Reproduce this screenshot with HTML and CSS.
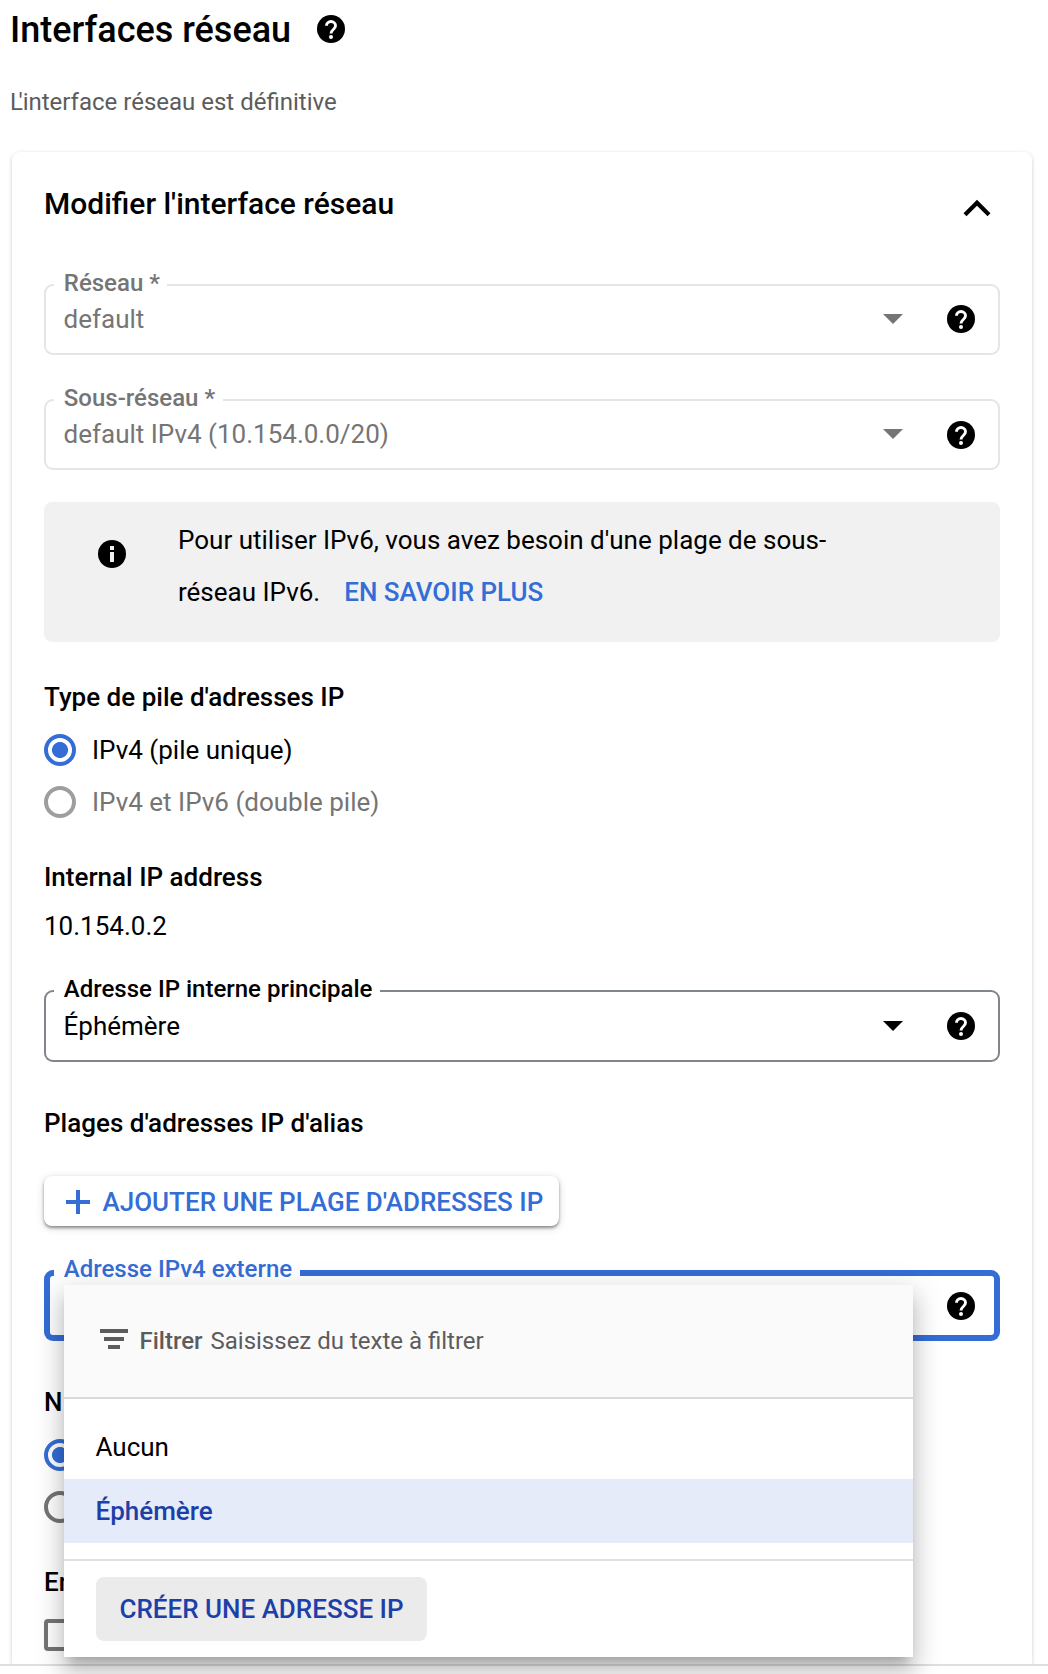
FILE: index.html
```html
<!DOCTYPE html>
<html lang="fr">
<head>
<meta charset="utf-8">
<title>Interfaces réseau</title>
<link rel="stylesheet" href="styles.css">
</head>
<body>
<svg class="sprite" aria-hidden="true">
  <symbol id="help" viewBox="0 0 28 28"><circle cx="14" cy="14" r="14"/><path d="M9.500 10.800a4.500 4.300 0 0 1 9 0c0 3.600-4.500 3.800-4.500 7.800" fill="none" stroke="#fff" stroke-width="2.900"/><circle cx="14" cy="22" r="2" fill="#fff"/></symbol>
</svg>
<main class="page">
  <header class="page-head">
    <h1 class="title">Interfaces réseau</h1>
    <svg class="help"><use href="#help"/></svg>
  </header>
  <p class="subtitle"><span class="kern">L</span>'interface réseau est définitive</p>

  <section class="card">
    <div class="card-head">
      <h2 class="card-title">Modifier l'interface réseau</h2>
      <svg class="chevron" viewBox="0 0 28 18"><path d="M2 15.700 14 3.700l12 12" fill="none" stroke="#000" stroke-width="4.200"/></svg>
    </div>

    <div class="field disabled">
      <span class="label">Réseau *</span>
      <span class="value">default</span>
      <svg class="arrow" viewBox="0 0 20 10"><path d="M0 0h20L10 10z"/></svg>
      <svg class="help"><use href="#help"/></svg>
    </div>
    <div class="field disabled second">
      <span class="label">Sous-réseau *</span>
      <span class="value">default IPv4 (10.154.0.0/20)</span>
      <svg class="arrow" viewBox="0 0 20 10"><path d="M0 0h20L10 10z"/></svg>
      <svg class="help"><use href="#help"/></svg>
    </div>

    <div class="notice">
      <svg class="info" viewBox="0 0 28 28"><circle cx="14" cy="14" r="14"/><path d="M12 6h4v4h-4zM12 12h4v10h-4z" fill="#f1f1f1"/></svg>
      <p class="notice-text">Pour utiliser IPv6, vous avez besoin d'une plage de sous-<br>réseau IPv6.<a class="link">EN SAVOIR PLUS</a></p>
    </div>

    <h3 class="heading">Type de pile d'adresses IP</h3>
    <div class="options">
      <div class="option"><span class="radio on"></span><span>IPv4 (pile unique)</span></div>
      <div class="option off"><span class="radio"></span><span>IPv4 et IPv6 (double pile)</span></div>
    </div>

    <h3 class="heading internal">Internal IP address</h3>
    <p class="address">10.154.0.2</p>

    <div class="field primary">
      <span class="label">Adresse IP interne principale</span>
      <span class="value">Éphémère</span>
      <svg class="arrow" viewBox="0 0 20 10"><path d="M0 0h20L10 10z"/></svg>
      <svg class="help"><use href="#help"/></svg>
    </div>

    <h3 class="heading alias">Plages d'adresses IP d'alias</h3>
    <button class="add"><svg class="plus" viewBox="0 0 24 24"><path d="M10 0h4v10h10v4H14v10h-4V14H0v-4h10z"/></svg><span>AJOUTER UNE PLAGE D'ADRESSES IP</span></button>

    <div class="field external">
      <span class="label">Adresse IPv4 externe</span>
      <svg class="help"><use href="#help"/></svg>
      <div class="menu">
        <div class="filter">
          <svg class="filter-icon" viewBox="0 0 28 20"><path d="M0 0h28v4H0zM4 8h20v4H4zM8 16h12v4H8z"/></svg>
          <span class="filter-name">Filtrer</span>
          <span class="filter-hint">Saisissez du texte à filtrer</span>
        </div>
        <div class="items">
          <div class="item">Aucun</div>
          <div class="item selected">Éphémère</div>
        </div>
        <div class="actions"><button class="create">CRÉER UNE ADRESSE IP</button></div>
      </div>
    </div>

    <h3 class="heading tier">N</h3>
    <div class="options">
      <div class="option"><span class="radio on"></span></div>
      <div class="option"><span class="radio"></span></div>
    </div>
    <h3 class="heading extra">En</h3>
    <span class="checkbox"></span>
  </section>
  <footer class="page-foot"></footer>
</main>
</body>
</html>
```
FILE: styles.css
```css
* { box-sizing: border-box; margin: 0; padding: 0; }
body {
  font-family: Roboto, "Liberation Sans", sans-serif;
  font-size: 26px;
  line-height: 32px;
  color: #000;
  background: #fff;
}
h1, h2, h3 { font-weight: 500; }
button { font: inherit; border: 0; }
.sprite { position: absolute; width: 0; height: 0; }
.page { display: flow-root; height: 1674px; overflow: hidden; }

.page-head { display: flex; align-items: flex-start; gap: 26px; height: 40px; margin: 10px 0 0 10px; }
.title { font-size: 36px; line-height: 40px; width: 280px; white-space: nowrap; }
.help { display: block; flex: none; width: 28px; height: 28px; }
.page-head .help { margin-top: 5px; }
.subtitle { margin: 36px 0 0 10px; font-size: 24px; line-height: 32px; color: #5c5c5c; }
.kern { letter-spacing: -4.5px; }

.card {
  height: 1512px;
  margin: 34px 16px 0 12px;
  padding: 0 32px;
  background: #fff;
  border-radius: 8px 8px 0 0;
  box-shadow: 0 2px 4px rgba(0, 0, 0, .15), 0 0 4px rgba(0, 0, 0, .06);
}
.page-foot { position: relative; z-index: 1; height: 10px; border-top: 2px solid #dfdfdf; background: #fff; }
.card-head { display: flex; justify-content: space-between; height: 132px; padding-top: 36px; }
.card-title { font-size: 30px; line-height: 32px; }
.chevron { width: 28px; height: 18px; margin: 11px 9.500px 0 0; }
.page-head .help { margin-left: .5px; }

.field {
  --line: #e5e5e5;
  position: relative;
  display: flex;
  align-items: flex-start;
  height: 71px;
  padding: 0 25px 0 19.500px;
  border-radius: 9px;
  box-shadow: inset 0 0 0 2px var(--line);
}
.label {
  position: absolute;
  left: 10px;
  top: -16px;
  padding: 0 7.500px 0 9.800px;
  background: #fff;
  font-size: 24px;
  font-weight: 500;
  line-height: 30px;
  white-space: nowrap;
}
.value { flex: 1; margin-top: 19px; }
.arrow { width: 20px; height: 10px; margin: 30px 44px 0 0; }
.field .help { margin: 21px 0 0; }
.disabled { color: #757575; }
.disabled .arrow { fill: #757575; }
.second { margin-top: 44px; }
.second .help { margin-top: 22px; }

.notice {
  display: flex;
  height: 140px;
  margin-top: 32px;
  padding: 12px 54px 0;
  background: #f1f1f1;
  border-radius: 8px;
}
.info { flex: none; width: 28px; height: 28px; margin: 26px 52px 0 0; }
.notice-text { line-height: 52px; white-space: nowrap; }
.link { margin-left: 24px; color: #346dd6; font-weight: 500; }

.heading { font-size: 26px; line-height: 32px; margin-top: 39px; }
.options { display: flex; flex-direction: column; gap: 20px; margin-top: 21px; }
.option { display: flex; gap: 16px; height: 32px; }
.option.off { color: #757575; }
.radio { width: 32px; height: 32px; border: 4px solid #757575; border-radius: 50%; }
.off .radio { border-color: #9e9e9e; }
.radio.on {
  border-color: #346dd6;
  background: radial-gradient(circle, #346dd6 7.600px, transparent 8.400px);
}
.internal { margin-top: 43px; }
.address { margin-top: 17px; }
.primary { --line: #80868b; height: 72px; margin-top: 48px; }
.primary .value { margin-top: 20px; }
.primary .arrow { margin-top: 31px; }
.primary .help { margin-top: 22px; }
.alias { margin-top: 45px; }
.add {
  display: flex;
  align-items: center;
  width: 515px;
  height: 50px;
  margin-top: 37px;
  padding: 1px 0 0 22px;
  gap: 12.500px;
  border-radius: 8px;
  background: #fff;
  color: #346dd6;
  font-weight: 500;
  white-space: nowrap;
  box-shadow: 0 2px 3px rgba(0, 0, 0, .38), 0 2px 8px rgba(0, 0, 0, .16);
}
.plus { width: 24px; height: 24px; fill: currentColor; }
.external { --line: #346dd6; justify-content: flex-end; margin-top: 44px; box-shadow: inset 0 0 0 6px var(--line); }
.external .label { color: #346dd6; }
.external .help { margin-top: 22px; }

.menu {
  position: absolute;
  left: 20px;
  top: 15px;
  z-index: 2;
  width: 849px;
  height: 372px;
  background: #fff;
  box-shadow: 0 10px 10px -6px rgba(0, 0, 0, .2), 0 16px 20px 2px rgba(0, 0, 0, .14), 0 6px 28px 4px rgba(0, 0, 0, .12);
}
.filter { display: flex; height: 114px; padding: 40px 36px 0; background: #fafafa; border-bottom: 2px solid #dadada; color: #5c5c5c; font-size: 24px; }
.filter-icon { width: 28px; height: 20px; margin: 4px 11.500px 0 0; fill: currentColor; }
.filter-name { width: 71px; font-weight: 500; }
.items { padding: 16px 0; border-bottom: 2px solid #e0e0e0; }
.item { height: 64px; padding: 0 31.500px; line-height: 64px; }
.selected { background: #e6ebf9; color: #1d3fa8; font-weight: 500; }
.actions { padding: 16px 32px; }
.create { width: 331px; height: 64px; border-radius: 8px; background: #ebebeb; color: #1d3fa8; font-weight: 500; white-space: nowrap; }
.tier { margin-top: 45px; }
.extra { margin-top: 43px; }
.checkbox { display: block; width: 32px; height: 32px; margin-top: 21px; border: 4px solid #757575; border-radius: 4px; }
```
